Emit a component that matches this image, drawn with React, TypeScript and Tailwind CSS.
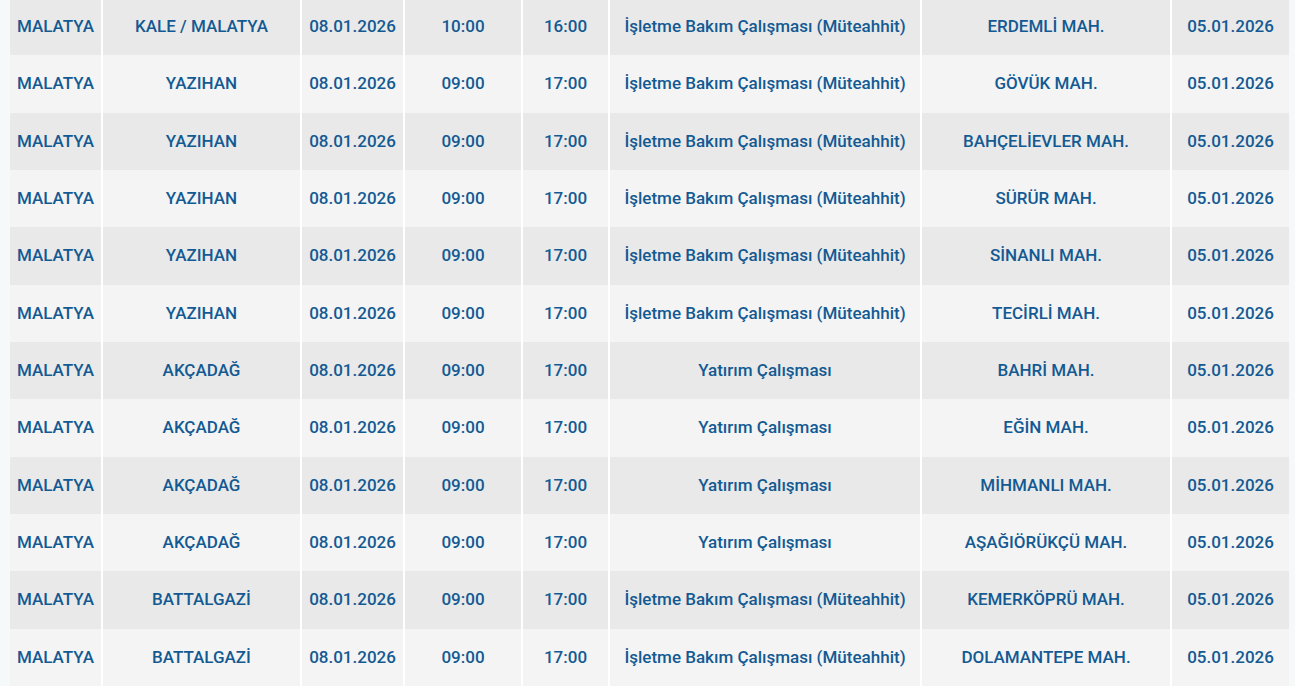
import React from "react";

type Row = {
  il: string;
  ilce: string;
  tarih: string;
  bas: string;
  bit: string;
  neden: string;
  mahalle: string;
  duyuru: string;
};

const BAKIM = "İşletme Bakım Çalışması (Müteahhit)";
const YATIRIM = "Yatırım Çalışması";

const rows: Row[] = [
  { il: "MALATYA", ilce: "KALE / MALATYA", tarih: "08.01.2026", bas: "10:00", bit: "16:00", neden: BAKIM, mahalle: "ERDEMLİ MAH.", duyuru: "05.01.2026" },
  { il: "MALATYA", ilce: "YAZIHAN", tarih: "08.01.2026", bas: "09:00", bit: "17:00", neden: BAKIM, mahalle: "GÖVÜK MAH.", duyuru: "05.01.2026" },
  { il: "MALATYA", ilce: "YAZIHAN", tarih: "08.01.2026", bas: "09:00", bit: "17:00", neden: BAKIM, mahalle: "BAHÇELİEVLER MAH.", duyuru: "05.01.2026" },
  { il: "MALATYA", ilce: "YAZIHAN", tarih: "08.01.2026", bas: "09:00", bit: "17:00", neden: BAKIM, mahalle: "SÜRÜR MAH.", duyuru: "05.01.2026" },
  { il: "MALATYA", ilce: "YAZIHAN", tarih: "08.01.2026", bas: "09:00", bit: "17:00", neden: BAKIM, mahalle: "SİNANLI MAH.", duyuru: "05.01.2026" },
  { il: "MALATYA", ilce: "YAZIHAN", tarih: "08.01.2026", bas: "09:00", bit: "17:00", neden: BAKIM, mahalle: "TECİRLİ MAH.", duyuru: "05.01.2026" },
  { il: "MALATYA", ilce: "AKÇADAĞ", tarih: "08.01.2026", bas: "09:00", bit: "17:00", neden: YATIRIM, mahalle: "BAHRİ MAH.", duyuru: "05.01.2026" },
  { il: "MALATYA", ilce: "AKÇADAĞ", tarih: "08.01.2026", bas: "09:00", bit: "17:00", neden: YATIRIM, mahalle: "EĞİN MAH.", duyuru: "05.01.2026" },
  { il: "MALATYA", ilce: "AKÇADAĞ", tarih: "08.01.2026", bas: "09:00", bit: "17:00", neden: YATIRIM, mahalle: "MİHMANLI MAH.", duyuru: "05.01.2026" },
  { il: "MALATYA", ilce: "AKÇADAĞ", tarih: "08.01.2026", bas: "09:00", bit: "17:00", neden: YATIRIM, mahalle: "AŞAĞIÖRÜKÇÜ MAH.", duyuru: "05.01.2026" },
  { il: "MALATYA", ilce: "BATTALGAZİ", tarih: "08.01.2026", bas: "09:00", bit: "17:00", neden: BAKIM, mahalle: "KEMERKÖPRÜ MAH.", duyuru: "05.01.2026" },
  { il: "MALATYA", ilce: "BATTALGAZİ", tarih: "08.01.2026", bas: "09:00", bit: "17:00", neden: BAKIM, mahalle: "DOLAMANTEPE MAH.", duyuru: "05.01.2026" },
];

const Cell: React.FC<{ children: React.ReactNode; last?: boolean }> = ({ children, last }) => (
  <div
    className={
      "flex items-center justify-center whitespace-nowrap " +
      (last ? "" : "border-r-2 border-white")
    }
  >
    {children}
  </div>
);

const App: React.FC = () => {
  return (
    <div className="w-[1295px] h-[686px] overflow-hidden bg-[#f6f9fa] pl-[10px] font-['Roboto',sans-serif] text-[17px] font-medium text-[#135a93]">
      {/* outage table */}
      <div className="mt-[-2px] w-[1279px] flex flex-col">
        {rows.map((r, i) => (
          <div
            key={i}
            className={
              "grid grid-cols-[93px_199px_103px_118px_87px_312px_250px_117px] h-[57.33px] " +
              (i % 2 === 0 ? "bg-[#e9e9e9]" : "bg-[#f4f4f4]")
            }
          >
            <Cell>{r.il}</Cell>
            <Cell>{r.ilce}</Cell>
            <Cell>{r.tarih}</Cell>
            <Cell>{r.bas}</Cell>
            <Cell>{r.bit}</Cell>
            <Cell>{r.neden}</Cell>
            <Cell>{r.mahalle}</Cell>
            <Cell last>{r.duyuru}</Cell>
          </div>
        ))}
      </div>
    </div>
  );
};

export default App;
